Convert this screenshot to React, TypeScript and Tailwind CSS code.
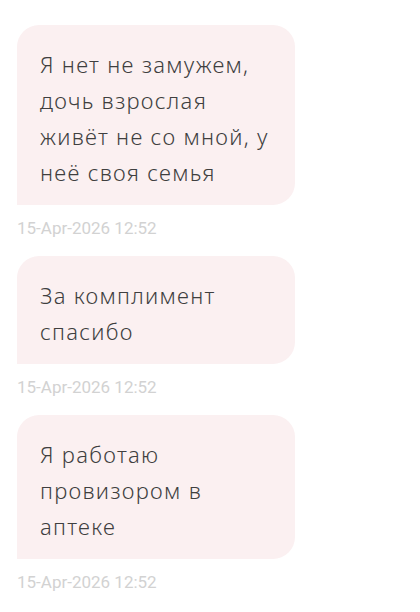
import React from "react";

type Message = { lines: string[]; time: string };

const messages: Message[] = [
  {
    lines: ["Я нет не замужем,", "дочь взрослая", "живёт не со мной, у", "неё своя семья"],
    time: "15-Apr-2026 12:52",
  },
  { lines: ["За комплимент", "спасибо"], time: "15-Apr-2026 12:52" },
  { lines: ["Я работаю", "провизором в", "аптеке"], time: "15-Apr-2026 12:52" },
];

function Bubble({ lines, time }: Message) {
  return (
    <div className="flex flex-col items-start">
      <div className="w-[278px] rounded-t-[22px] rounded-br-[22px] rounded-bl-none bg-[#fbf0f1] pl-[23px] pr-[16px] pt-[21px] pb-[15px]">
        {lines.map((l, i) => (
          <div
            key={i}
            className="whitespace-nowrap text-[22px] font-light leading-[36px] tracking-[1.3px] text-[#3f3f3f] [font-family:'Noto_Sans',sans-serif]"
          >
            {l}
          </div>
        ))}
      </div>
      <div className="mt-[13px] mb-[18px] text-[17px] leading-[20px] text-[#d2d2d2] [font-family:Roboto,sans-serif]">
        {time}
      </div>
    </div>
  );
}

export default function App() {
  return (
    <div className="min-h-[612px] w-[420px] bg-white pl-[17px] pt-[25px]">
      {messages.map((m, i) => (
        <Bubble key={i} {...m} />
      ))}
    </div>
  );
}
